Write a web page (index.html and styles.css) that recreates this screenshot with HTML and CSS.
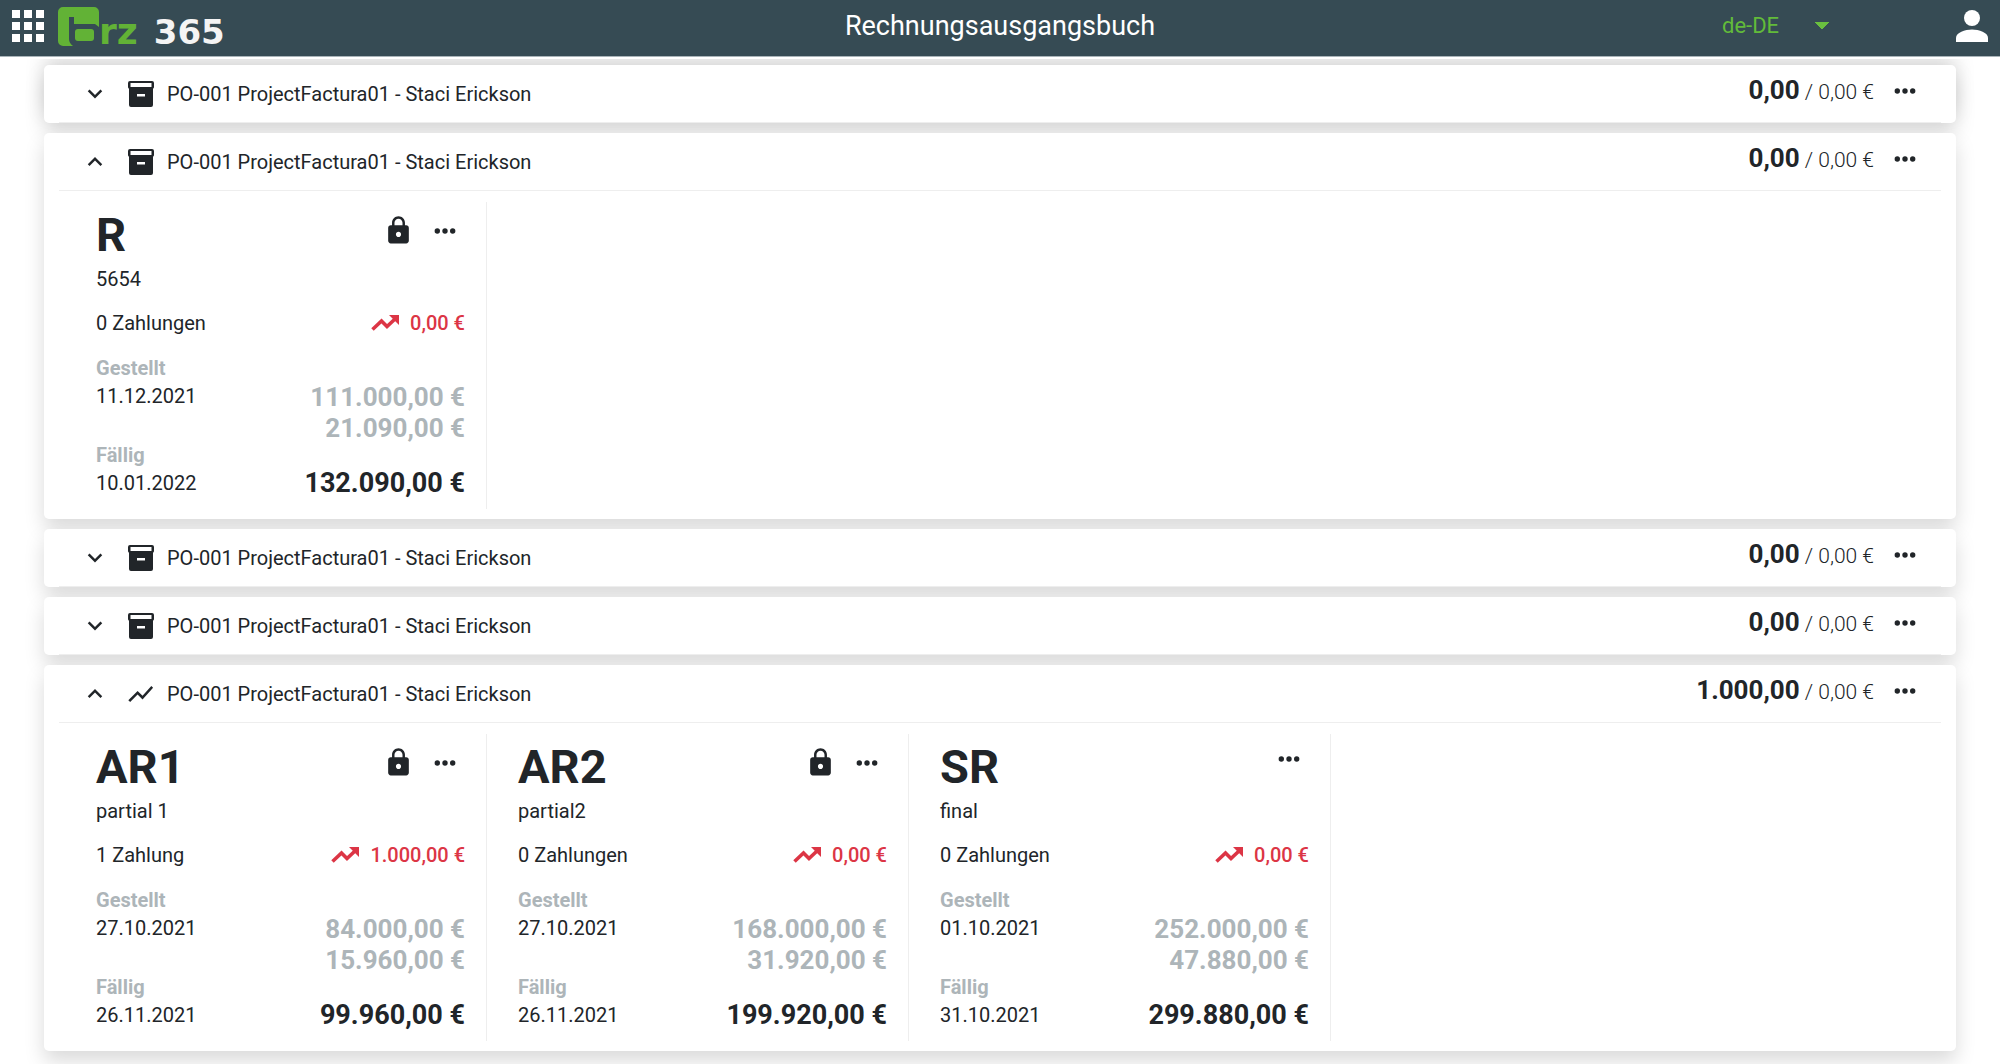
FILE: index.html
```html
<!DOCTYPE html>
<html lang="de">
<head>
<meta charset="utf-8">
<meta name="viewport" content="width=device-width, initial-scale=1">
<title>Rechnungsausgangsbuch</title>
<link rel="stylesheet" href="styles.css">
</head>
<body>
<svg class="sprite" aria-hidden="true">
  <symbol id="down" viewBox="0 0 24 24"><path d="M7.300 8.200 12 12.900l4.700-4.700L18.200 9.700 12 15.900 5.800 9.700z"/></symbol>
  <symbol id="up" viewBox="0 0 24 24"><path d="M7.300 15.500 12 10.800l4.700 4.700 1.500-1.500L12 7.800 5.800 14z"/></symbol>
  <symbol id="archive" viewBox="0 0 26 26"><path fill-rule="evenodd" d="M2 0h22a2 2 0 0 1 2 2v4a2 2 0 0 1-1 1.700V24a2 2 0 0 1-2 2H3a2 2 0 0 1-2-2V7.700A2 2 0 0 1 0 6V2a2 2 0 0 1 2-2zM2.500 2v4h21V2zM9 13v2.500h8V13z"/></symbol>
  <symbol id="timeline" viewBox="2 1.500 20.500 21"><path d="m3.500 18.490 6-6.010 4 4L22 6.920l-1.410-1.410-7.090 7.970-4-4L2 16.990z"/></symbol>
  <symbol id="trend" viewBox="0 0 28 16"><path d="M1.500 14.500 10.500 6l5.500 5.500L24 4" fill="none" stroke="currentColor" stroke-width="3.600"/><path d="M18 0h10v10z"/></symbol>
  <symbol id="lock" viewBox="0 0 24 24"><path d="M18 8h-1V6c0-2.760-2.240-5-5-5S7 3.240 7 6v2H6c-1.100 0-2 .9-2 2v10c0 1.100.9 2 2 2h12c1.100 0 2-.9 2-2V10c0-1.100-.9-2-2-2zm-6 9c-1.100 0-2-.9-2-2s.9-2 2-2 2 .9 2 2-.9 2-2 2zm3.100-9H8.900V6c0-1.710 1.390-3.100 3.100-3.100s3.100 1.390 3.100 3.100z"/></symbol>
  <symbol id="dots" viewBox="0 0 24 24"><circle cx="5.400" cy="12" r="2.300"/><circle cx="12" cy="12" r="2.300"/><circle cx="18.600" cy="12" r="2.300"/></symbol>
</svg>

<header class="topbar">
  <div class="brand">
    <button class="icon-button" type="button" aria-label="Apps">
      <svg class="apps" viewBox="0 0 32 32"><path d="M0 0h8v8H0zM12 0h8v8h-8zM24 0h8v8h-8zM0 12h8v8H0zM12 12h8v8h-8zM24 12h8v8h-8zM0 24h8v8H0zM12 24h8v8h-8zM24 24h8v8h-8z"/></svg>
    </button>
    <a class="logo" href="#">
      <svg class="logo-mark" viewBox="0 0 41 39" aria-hidden="true"><path d="M5 0h31a5 5 0 0 1 5 5v15l-4-3H16v-7h-5v22q0 4 4 7H5a5 5 0 0 1-5-5V5a5 5 0 0 1 5-5z"/><rect x="17" y="22" width="19" height="12" rx="3"/></svg>
      <span class="wordmark"><span class="logo-name">rz</span><span class="logo-number">365</span></span>
    </a>
  </div>
  <h1 class="page-title">Rechnungsausgangsbuch</h1>
  <div class="tools">
    <select class="language" aria-label="Sprache"><option>de-DE</option></select>
    <button class="icon-button" type="button" aria-label="Profil">
      <svg class="person" viewBox="0 0 32 32"><circle cx="16" cy="8" r="8"/><path d="M0 32v-4c0-5.500 9-8.500 16-8.500s16 3 16 8.500v4z"/></svg>
    </button>
  </div>
</header>

<main class="book">
  <section class="project">
    <div class="project-head">
      <button class="icon-button" type="button" aria-label="Aufklappen"><svg class="icon"><use href="#down"/></svg></button>
      <svg class="kind"><use href="#archive"/></svg>
      <h2 class="project-name">PO-001 ProjectFactura01 - Staci Erickson</h2>
      <div class="project-side">
        <p class="balance"><strong>0,00</strong> / 0,00 €</p>
        <button class="icon-button" type="button" aria-label="Mehr"><svg class="icon"><use href="#dots"/></svg></button>
      </div>
    </div>
  </section>

  <section class="project">
    <div class="project-head">
      <button class="icon-button" type="button" aria-label="Zuklappen"><svg class="icon"><use href="#up"/></svg></button>
      <svg class="kind"><use href="#archive"/></svg>
      <h2 class="project-name">PO-001 ProjectFactura01 - Staci Erickson</h2>
      <div class="project-side">
        <p class="balance"><strong>0,00</strong> / 0,00 €</p>
        <button class="icon-button" type="button" aria-label="Mehr"><svg class="icon"><use href="#dots"/></svg></button>
      </div>
    </div>
    <div class="invoices">
      <article class="invoice">
        <div class="invoice-head">
          <h3 class="code">R</h3>
          <div class="actions locked">
            <svg class="lock"><use href="#lock"/></svg>
            <button class="icon-button" type="button" aria-label="Mehr"><svg class="icon"><use href="#dots"/></svg></button>
          </div>
        </div>
        <p class="label">5654</p>
        <div class="payments"><span>0 Zahlungen</span><span class="open"><svg class="trend"><use href="#trend"/></svg>0,00 €</span></div>
        <div class="figures">
          <dl class="dates"><dt>Gestellt</dt><dd>11.12.2021</dd><dt>Fällig</dt><dd>10.01.2022</dd></dl>
          <div class="sums"><p>111.000,00 €</p><p>21.090,00 €</p><p class="total">132.090,00 €</p></div>
        </div>
      </article>
    </div>
  </section>

  <section class="project">
    <div class="project-head">
      <button class="icon-button" type="button" aria-label="Aufklappen"><svg class="icon"><use href="#down"/></svg></button>
      <svg class="kind"><use href="#archive"/></svg>
      <h2 class="project-name">PO-001 ProjectFactura01 - Staci Erickson</h2>
      <div class="project-side">
        <p class="balance"><strong>0,00</strong> / 0,00 €</p>
        <button class="icon-button" type="button" aria-label="Mehr"><svg class="icon"><use href="#dots"/></svg></button>
      </div>
    </div>
  </section>

  <section class="project">
    <div class="project-head">
      <button class="icon-button" type="button" aria-label="Aufklappen"><svg class="icon"><use href="#down"/></svg></button>
      <svg class="kind"><use href="#archive"/></svg>
      <h2 class="project-name">PO-001 ProjectFactura01 - Staci Erickson</h2>
      <div class="project-side">
        <p class="balance"><strong>0,00</strong> / 0,00 €</p>
        <button class="icon-button" type="button" aria-label="Mehr"><svg class="icon"><use href="#dots"/></svg></button>
      </div>
    </div>
  </section>

  <section class="project">
    <div class="project-head">
      <button class="icon-button" type="button" aria-label="Zuklappen"><svg class="icon"><use href="#up"/></svg></button>
      <svg class="kind"><use href="#timeline"/></svg>
      <h2 class="project-name">PO-001 ProjectFactura01 - Staci Erickson</h2>
      <div class="project-side">
        <p class="balance"><strong>1.000,00</strong> / 0,00 €</p>
        <button class="icon-button" type="button" aria-label="Mehr"><svg class="icon"><use href="#dots"/></svg></button>
      </div>
    </div>
    <div class="invoices">
      <article class="invoice">
        <div class="invoice-head">
          <h3 class="code">AR1</h3>
          <div class="actions locked">
            <svg class="lock"><use href="#lock"/></svg>
            <button class="icon-button" type="button" aria-label="Mehr"><svg class="icon"><use href="#dots"/></svg></button>
          </div>
        </div>
        <p class="label">partial 1</p>
        <div class="payments"><span>1 Zahlung</span><span class="open"><svg class="trend"><use href="#trend"/></svg>1.000,00 €</span></div>
        <div class="figures">
          <dl class="dates"><dt>Gestellt</dt><dd>27.10.2021</dd><dt>Fällig</dt><dd>26.11.2021</dd></dl>
          <div class="sums"><p>84.000,00 €</p><p>15.960,00 €</p><p class="total">99.960,00 €</p></div>
        </div>
      </article>
      <article class="invoice">
        <div class="invoice-head">
          <h3 class="code">AR2</h3>
          <div class="actions locked">
            <svg class="lock"><use href="#lock"/></svg>
            <button class="icon-button" type="button" aria-label="Mehr"><svg class="icon"><use href="#dots"/></svg></button>
          </div>
        </div>
        <p class="label">partial2</p>
        <div class="payments"><span>0 Zahlungen</span><span class="open"><svg class="trend"><use href="#trend"/></svg>0,00 €</span></div>
        <div class="figures">
          <dl class="dates"><dt>Gestellt</dt><dd>27.10.2021</dd><dt>Fällig</dt><dd>26.11.2021</dd></dl>
          <div class="sums"><p>168.000,00 €</p><p>31.920,00 €</p><p class="total">199.920,00 €</p></div>
        </div>
      </article>
      <article class="invoice">
        <div class="invoice-head">
          <h3 class="code">SR</h3>
          <div class="actions">
            <button class="icon-button" type="button" aria-label="Mehr"><svg class="icon"><use href="#dots"/></svg></button>
          </div>
        </div>
        <p class="label">final</p>
        <div class="payments"><span>0 Zahlungen</span><span class="open"><svg class="trend"><use href="#trend"/></svg>0,00 €</span></div>
        <div class="figures">
          <dl class="dates"><dt>Gestellt</dt><dd>01.10.2021</dd><dt>Fällig</dt><dd>31.10.2021</dd></dl>
          <div class="sums"><p>252.000,00 €</p><p>47.880,00 €</p><p class="total">299.880,00 €</p></div>
        </div>
      </article>
    </div>
  </section>
</main>
</body>
</html>
```
FILE: styles.css
```css
* { box-sizing: border-box; }

body {
  margin: 0;
  height: 100vh;
  display: flex;
  flex-direction: column;
  background: #fff;
  color: #212529;
  font: 400 20px/28px Roboto, sans-serif;
  overflow: hidden;
}

h1, h2, h3, p, dl, dd { margin: 0; font-weight: 400; }

svg { fill: currentColor; flex: none; }
.sprite { display: none; }

.icon-button {
  display: flex;
  padding: 0;
  border: 0;
  background: none;
  color: inherit;
  cursor: pointer;
}

.topbar {
  flex: none;
  display: grid;
  grid-template-columns: 1fr auto 1fr;
  align-items: center;
  height: 57px;
  margin-bottom: 2px;
  padding: 0 12px 4px;
  border-bottom: 1px solid #a9b4b9;
  background: #364b54;
  color: #fff;
}

.brand, .logo, .tools { display: flex; align-items: center; }
.brand { gap: 14px; }
.apps { width: 32px; height: 32px; }
.logo { height: 52px; text-decoration: none; }
.logo-mark { width: 41px; height: 39px; color: #62b236; }
.wordmark {
  padding-top: 12px;
  font: 700 36px/52px "DejaVu Sans", sans-serif;
}
.logo-name { color: #62b236; }
.logo-number { margin-left: 16px; color: #f4f4f4; font-size: 34px; }

.page-title { font-size: 27px; line-height: 32px; }

.tools { justify-content: flex-end; gap: 122px; }
.language {
  width: 112px;
  padding: 0;
  border: 0;
  appearance: none;
  background:
    linear-gradient(to top right, transparent 50%, #6abf3f 50%) right 12px center / 7px 8px no-repeat,
    linear-gradient(to top left, transparent 50%, #6abf3f 50%) right 5px center / 7px 8px no-repeat;
  color: #62bb3a;
  font: inherit;
  font-size: 22px;
}
.person { width: 32px; height: 32px; }

.book {
  flex: 1;
  min-height: 0;
  display: flex;
  flex-direction: column;
  gap: 10px;
  padding: 6px 44px 10px;
  overflow: hidden;
}

.project {
  flex: none;
  padding: 0 15px;
  border-radius: 5px;
  background: #fff;
  box-shadow: 0 10px 20px rgba(0, 0, 0, .15);
}
.project:first-child {
  box-shadow: 0 10px 20px rgba(0, 0, 0, .15), 0 -10px 20px rgba(0, 0, 0, .13);
}

.project-head {
  display: flex;
  align-items: center;
  height: 58px;
  padding: 0 22px;
  border-bottom: 1px solid #eee;
}
.icon { width: 28px; height: 28px; }
.kind { width: 26px; height: 26px; margin: 0 13px 0 19px; }
.project-name { flex: 1; font-size: 20px; line-height: 28px; }
.project-side { display: flex; align-items: center; gap: 17px; padding-bottom: 5px; }
.balance { font-size: 21px; font-weight: 300; }
.balance strong { font-size: 26px; font-weight: 700; }

.invoices { display: flex; flex-wrap: wrap; padding: 11px 6px 10px; }
.invoice {
  width: 422px;
  padding: 5px 21px 10px 31px;
  border-right: 1px solid #eee;
}
.invoice-head { display: flex; align-items: flex-start; padding-right: 6px; }
.code { flex: 1; font-size: 47px; font-weight: 700; line-height: 56px; }
.actions { display: flex; align-items: center; gap: 17px; padding-top: 6px; }
.actions.locked { padding-top: 8px; }
.lock { width: 31px; height: 31px; }
.label { margin-top: 2px; }
.payments { display: flex; justify-content: space-between; margin-top: 16px; }
.open { display: flex; align-items: center; gap: 11px; color: #dc3545; font-weight: 500; }
.trend { width: 28px; height: 16px; }
.figures { display: flex; justify-content: space-between; margin-top: 17px; }
.dates dt { color: #adb5b9; font-weight: 700; }
.dates dd + dt { margin-top: 31px; }
.sums { padding-top: 28px; color: #adb5b9; font-size: 26px; line-height: 31px; text-align: right; }
.sums p { font-weight: 700; }
.sums .total { margin-top: 24px; color: #212529; font-size: 27px; }
```
